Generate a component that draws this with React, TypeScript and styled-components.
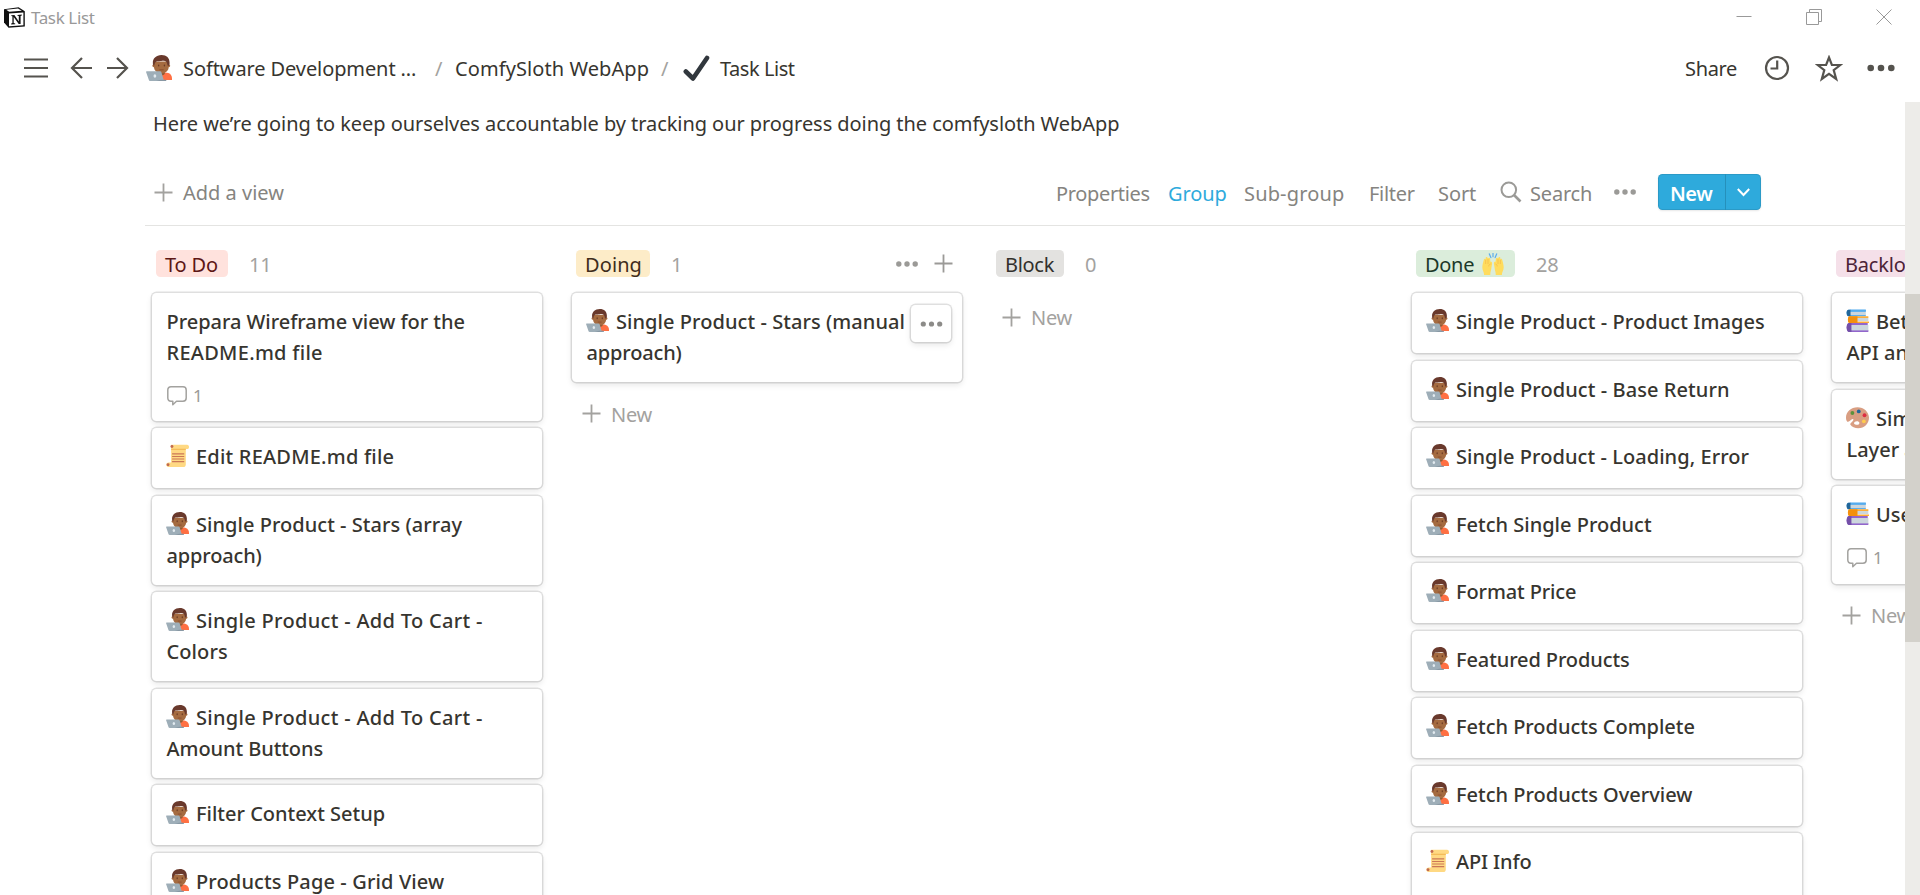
import React from 'react';
import styled, { createGlobalStyle, css } from 'styled-components';

const GlobalStyle = createGlobalStyle`
  *, *::before, *::after { box-sizing: border-box; }
  body { margin: 0; background: #fff; overflow: hidden; }
`;

const Window = styled.div`
  width: 1920px;
  height: 895px;
  display: flex;
  flex-direction: column;
  overflow: hidden;
  background: #fff;
  color: #37352f;
  font-family: "Noto Sans", "Open Sans", sans-serif;
  font-size: 20px;
  line-height: 31px;
  white-space: nowrap;
`;

const Tracked = styled.span<{ $track?: number }>`
  letter-spacing: ${(p) => p.$track ?? 0}px;
`;

const TitleBar = styled.header`
  flex: 0 0 34px;
  display: flex;
  align-items: center;
  padding: 0 28px 0 3px;
`;

const WindowTitle = styled.span`
  flex: 1;
  margin: 1px 0 0 5px;
  font-size: 17px;
  line-height: 24px;
  letter-spacing: -0.38px;
  color: #999;
`;

const WindowControls = styled.div`
  display: flex;
  gap: 54px;
`;

const TopBar = styled.nav`
  flex: 0 0 68px;
  display: flex;
  align-items: center;
  padding: 0 25px 0 24px;
`;

const NavIcons = styled.div`
  display: grid;
  grid-template-columns: 46px 36px 40px;
  align-items: center;
`;

const Crumbs = styled.div`
  flex: 1;
  display: grid;
  grid-template-columns: 37px 252px 20px 206px 22px 37px 1fr;
  align-items: center;
`;

const Slash = styled.span`
  color: #a3a29e;
`;

const TopActions = styled.div`
  display: grid;
  grid-template-columns: 79px 51px 52px 28px;
  align-items: center;
`;

const Viewport = styled.main`
  flex: 1;
  min-height: 0;
  display: flex;
`;

const Page = styled.div`
  flex: 1;
  min-width: 0;
  overflow: hidden;
`;

const ScrollTrack = styled.div`
  flex: 0 0 15px;
  padding-top: 192px;
  background: #edece9;
`;

const ScrollThumb = styled.div`
  height: 348px;
  background: #d3d1cb;
`;

const Description = styled.p`
  margin: 6px 0 0 153px;
  height: 33px;
  line-height: 32px;
`;

const ViewBar = styled.div`
  display: flex;
  align-items: center;
  justify-content: space-between;
  height: 85px;
  margin: 0 0 0 145px;
  padding: 18px 144px 0 9px;
  border-bottom: 1px solid #e4e4e2;
  color: #858480;
`;

const AddView = styled.div`
  display: flex;
  align-items: center;
  gap: 10px;

  span {
    padding-top: 1px;
  }
`;

const ViewTools = styled.div`
  display: grid;
  grid-template-columns: 112px 76px 125px 69px 62px 30px 84px 44px 103px;
  align-items: center;
`;

const Tool = styled(Tracked)<{ $active?: boolean }>`
  padding-top: 2px;
  color: ${(p) => (p.$active ? '#2eaadc' : '#858480')};
`;

const NewButton = styled.div`
  display: flex;
  height: 36px;
  border-radius: 4.5px;
  overflow: hidden;
  background: #2eaadc;
  box-shadow: inset 0 0 0 1px rgba(15, 15, 15, 0.1), 0 1px 2px rgba(15, 15, 15, 0.1);
  color: #fff;
  font-weight: 600;
`;

const NewLabel = styled.span`
  width: 68px;
  padding: 4px 0 0 12px;
  border-right: 1px solid #2590bb;
  letter-spacing: -0.5px;
`;

const NewArrow = styled.span`
  flex: 1;
  display: flex;
  align-items: center;
  justify-content: center;
`;

const Board = styled.div`
  display: flex;
  gap: 30px;
  padding: 24px 0 0 152px;
`;

const Column = styled.section`
  flex: 0 0 390px;
`;

const ColumnHead = styled.div`
  display: flex;
  align-items: center;
  height: 27px;
  margin-bottom: 16px;
  padding: 0 9px 0 4px;
`;

const tones = {
  red: css`background: #ffe2dd; color: #5d1715;`,
  yellow: css`background: #fdecc8; color: #402c1b;`,
  gray: css`background: #e3e2e0; color: #32302c;`,
  green: css`background: #dbeddb; color: #1c3829;`,
  pink: css`background: #f5e0e9; color: #4c2337;`,
};

const Tag = styled.span<{ $tone: keyof typeof tones; $width: number; $track: number }>`
  display: flex;
  align-items: center;
  gap: 8px;
  width: ${(p) => p.$width}px;
  height: 27px;
  padding: 1px 0 0 9px;
  border-radius: 4.5px;
  overflow: hidden;
  letter-spacing: ${(p) => p.$track}px;
  ${(p) => tones[p.$tone]}
`;

const Count = styled.span`
  flex: 1;
  margin: 1px 0 0 21px;
  letter-spacing: -0.2px;
  color: #a3a29f;
`;

const HeadActions = styled.div`
  display: flex;
  align-items: center;
  gap: 16px;
`;

const Card = styled.article<{ $height: number }>`
  position: relative;
  height: ${(p) => p.$height}px;
  margin-bottom: 7.5px;
  padding: 13px 14px 0;
  border-radius: 4.5px;
  background: #fff;
  box-shadow: 0 0 0 1.4px rgba(15, 15, 15, 0.12), 0 3px 6px rgba(15, 15, 15, 0.1);
  font-weight: 500;
`;

const Line = styled.div<{ $track: number }>`
  display: flex;
  height: 31px;
  padding-left: 0.5px;
  letter-spacing: ${(p) => p.$track}px;
`;

const CardEmoji = styled.span`
  flex: 0 0 30.5px;
  margin-left: -1px;
  padding-top: 3px;
  line-height: 0;
`;

const Comments = styled.div`
  display: flex;
  align-items: center;
  gap: 6px;
  margin: 16px 0 0 1px;
  color: #9b9a97;
  font-size: 17px;
  font-weight: 400;
  line-height: 24px;
`;

const MoreButton = styled.div`
  position: absolute;
  top: 12px;
  right: 11px;
  width: 40px;
  height: 37px;
  display: flex;
  align-items: center;
  justify-content: center;
  border-radius: 4.5px;
  background: #fff;
  box-shadow: 0 0 0 1.4px rgba(15, 15, 15, 0.12), 0 3px 6px rgba(15, 15, 15, 0.1);
`;

const AddCard = styled.div`
  display: flex;
  align-items: center;
  gap: 10px;
  height: 48px;
  padding-left: 10px;
  letter-spacing: -0.3px;
  color: #a3a29f;

  span {
    padding-top: 1px;
  }
`;

const Dots = ({ size, r, gap, color }: { size: number; r: number; gap: number; color: string }) => (
  <svg width={size} height="8" viewBox={`0 0 ${size} 8`} fill={color}>
    {[-gap, 0, gap].map((d) => (
      <circle key={d} cx={size / 2 + d} cy="4" r={r} />
    ))}
  </svg>
);

const Plus = ({ color = '#a3a29f' }: { color?: string }) => (
  <svg width="19" height="19" viewBox="0 0 19 19" stroke={color} strokeWidth="1.8">
    <path d="M9.5 0.5V18.5M0.5 9.5H18.5" />
  </svg>
);

const NotionLogo = () => (
  <svg width="23" height="23" viewBox="0 0 23 23">
    <path d="M1 3.2 15.6 1.2 21.8 5.2V20.4L5.6 21.8 1 16.6Z" fill="#111" />
    <path d="M3.2 3.8 15 2.4 18.8 4.8 6.2 5.7Z" fill="#fff" />
    <path d="M6 7.4 20.4 6.4V19.2L6 20.3Z" fill="#fff" />
    <path
      d="M8.3 9.2 11.4 9 15.8 15.4V10.1L14.5 9.7V8.9L18.8 8.6V9.4L17.6 9.9V17.9L15.7 18.1 10.7 11V17L12.2 17.5V18.2L8.2 18.4V17.6L9.4 17V10.3L8.3 10Z"
      fill="#111"
    />
  </svg>
);

const Technologist = ({ size }: { size: number }) => (
  <svg width={size} height={size} viewBox="0 0 36 36">
    <path d="M22 25c3-1 6-1 9 0 3.500 1.200 5 4 5 8v1.500H22Z" fill="#ff7043" />
    <path d="M17 21h9v5c-2 3-7 3-9 0Z" fill="#8f5a34" />
    <path d="M11 9h20.500v7c0 6-4.500 9.500-10.200 9.500S11 22 11 16Z" fill="#a56b40" />
    <circle cx="10.800" cy="15" r="2" fill="#a56b40" />
    <circle cx="31.500" cy="15" r="2" fill="#a56b40" />
    <path
      d="M21.500 0C14 0 9 5 9.500 11.500c0 2 .8 3.500 1.500 3.500 1 0 .5-3 2-5 1.300-1.800 3-1.300 5-1.500 3-.2 4.500-.8 6.500-.6 3 .3 4.500 2 4.800 4.100.2 1.600.6 3 1.700 3 1 0 1.700-1.800 1.700-4C32.700 4 28.500 0 21.500 0Z"
      fill="#69392c"
    />
    <ellipse cx="17.500" cy="14.500" rx="1" ry="1.500" fill="#6b3a24" />
    <ellipse cx="25.500" cy="14.500" rx="1" ry="1.500" fill="#6b3a24" />
    <path d="M18.500 20.500h6" stroke="#86492c" strokeWidth="1.200" />
    <path d="M1 22.500h18.500c1 0 1.500.4 1.800 1.300L25 36H6c-1 0-1.800-.5-2-1.300L.2 24c-.3-.9 0-1.500.8-1.500Z" fill="#9eaeb8" />
    <path d="M20.500 34.200h7.500V36H14Z" fill="#8898a4" />
    <ellipse cx="12.300" cy="29" rx="1.900" ry="2.400" fill="#e3ebf0" />
  </svg>
);

const Scroll = ({ size }: { size: number }) => (
  <svg width={size} height={size} viewBox="0 0 36 36">
    <path d="M8 1h25c2 0 3 1.500 3 3.500S35 8 33 8h-2v24c0 2.500-1.500 4-4 4H4c-2 0-3.500-1.500-3.500-3.500S2 29 4 29h4Z" fill="#ffd983" />
    <path d="M8 7.500h23v1.500H8Z" fill="#f0b04c" />
    <circle cx="9.300" cy="4" r="2.300" fill="#c1694f" />
    <circle cx="3.200" cy="32.500" r="2.300" fill="#c1694f" />
    <path d="M9.500 15.500h19M9.500 19.500h19M9.500 23.500h19M9.500 27.500h19" stroke="#cb7857" strokeWidth="1.800" />
  </svg>
);

const Books = ({ size }: { size: number }) => (
  <svg width={size} height={size} viewBox="0 0 36 36">
    <path d="M4 1h27v2H6v6h25v2.500H4C1.800 11.500 1 9 1 6.200S1.800 1 4 1Z" fill="#55acee" />
    <path d="M5.500 3H31v6.500H5.500Z" fill="#ccd6dd" />
    <path d="M6 1h25v3.500H6Z" fill="#55acee" />
    <path d="M1 5c.2-2.500 1.200-4 3-4h3v10.500H4C2 11.500.9 9 1 5Z" fill="#226699" />
    <path d="M6 11.500h29v2.500H9v5.500h27v2.500H6c-2 0-3-2-3-5.200s1-5.300 3-5.300Z" fill="#ffac33" />
    <path d="M9 14h26v5H9Z" fill="#ccd6dd" />
    <path d="M6 11.500h12v10.500H6c-2 0-3-2-3-5.200s1-5.300 3-5.300Z" fill="#f4900c" />
    <path d="M5 22h29v3H8v8h27v3H5c-2.500 0-4-2.800-4-7s1.500-7 4-7Z" fill="#9266cc" />
    <path d="M8 25h27v8.500H8Z" fill="#ccd6dd" />
    <path d="M5 22h3.500v14H5c-2.500 0-4-2.800-4-7s1.500-7 4-7Z" fill="#7450a8" />
  </svg>
);

const Palette = ({ size }: { size: number }) => (
  <svg width={size} height={size} viewBox="0 0 36 36">
    <path
      d="M18 2C8 2 0 9 0 18c0 3 .5 5 2 6.500 2 1.500 5-2.500 8-4 1.500-.5 2 .5 1.200 2-1.500 2.500-5.500 4.500-4.200 7C9 33 14 35 19 35c10 0 17-7.500 17-16.500S28 2 18 2Z"
      fill="#d99e82"
    />
    <path d="M14 24.500c2-1.500 7-1 7 2s-4 3.500-6.500 2.500-2.500-3-.5-4.500Z" fill="#fff" />
    <circle cx="10" cy="11" r="3" fill="#5c913b" />
    <circle cx="20" cy="8.500" r="3" fill="#226699" />
    <circle cx="29" cy="14.500" r="3" fill="#dd2e44" />
    <circle cx="28" cy="24" r="3" fill="#ffcc4d" />
  </svg>
);

const CheckMark = () => (
  <svg width="27" height="27" viewBox="0 0 27 27">
    <path d="M2.800 16.500 10 23.500 24 3" fill="none" stroke="#31373d" strokeWidth="4.600" strokeLinecap="round" strokeLinejoin="round" />
  </svg>
);

const RaisedHands = () => (
  <svg width="22" height="22" viewBox="0 0 36 36">
    <path d="M12 1.500l2.500 6M18 0v6M24 1.500l-2.500 6" stroke="#5dadec" strokeWidth="2" strokeLinecap="round" />
    <path
      d="M3 11c0-2 2.500-2 3 0V8c0-2 3-2 3.200 0l.8 1c.3-1.500 3-1.500 3.200.5l.6 5c1.500-.5 3 .5 2.700 2.500L15 27c-.5 3-1.500 4-1.500 9H3.500c0-5-3-7-3-12.500C.5 19 2 15 3 11Z"
      fill="#ffdc5d"
    />
    <path
      d="M33 11c0-2-2.500-2-3 0V8c0-2-3-2-3.200 0l-.8 1c-.3-1.500-3-1.500-3.200.5l-.6 5c-1.500-.5-3 .5-2.700 2.500L21 27c.5 3 1.500 4 1.500 9h10c0-5 3-7 3-12.500C35.500 19 34 15 33 11Z"
      fill="#ffdc5d"
    />
    <path d="M6 11v7M9.800 10v8M30 11v7M26.200 10v8M11 22c0-2 1-3.500 3-4M25 22c0-2-1-3.500-3-4" fill="none" stroke="#f2b146" strokeWidth="1" />
  </svg>
);

const CommentIcon = () => (
  <svg width="20" height="20" viewBox="0 0 20 20" fill="none" stroke="#a3a29f" strokeWidth="1.500" strokeLinejoin="round">
    <path d="M4 .8h12c2 0 3.200 1.200 3.200 3.200v8c0 2-1.200 3.200-3.200 3.200h-6.500L5.800 18.700V15.200H4C2 15.200.8 14 .8 12V4C.8 2 2 .8 4 .8Z" />
  </svg>
);

const emojis = { tech: Technologist, scroll: Scroll, books: Books, palette: Palette };

type CardData = {
  emoji?: keyof typeof emojis;
  lines: [string, number][];
  height?: number;
  comments?: number;
  more?: boolean;
};

type ColumnData = {
  name: string;
  tone: keyof typeof tones;
  tagWidth: number;
  track: number;
  count?: number;
  hands?: boolean;
  actions?: boolean;
  addNew?: boolean;
  cards: CardData[];
};

const columns: ColumnData[] = [
  {
    name: 'To Do', tone: 'red', tagWidth: 72, track: -0.15, count: 11,
    cards: [
      { lines: [['Prepara Wireframe view for the', -0.03], ['README.md file', 0.28]], comments: 1 },
      { emoji: 'scroll', lines: [['Edit README.md file', 0.21]] },
      { emoji: 'tech', lines: [['Single Product - Stars (array', 0.04], ['approach)', -0.16]] },
      { emoji: 'tech', lines: [['Single Product - Add To Cart -', 0.31], ['Colors', 0.1]] },
      { emoji: 'tech', lines: [['Single Product - Add To Cart -', 0.31], ['Amount Buttons', -0.07]] },
      { emoji: 'tech', lines: [['Filter Context Setup', 0]] },
      { emoji: 'tech', lines: [['Products Page - Grid View', 0.13]] },
    ],
  },
  {
    name: 'Doing', tone: 'yellow', tagWidth: 74, track: 0.1, count: 1, actions: true, addNew: true,
    cards: [{ emoji: 'tech', lines: [['Single Product - Stars (manual', 0.06], ['approach)', -0.16]], more: true }],
  },
  { name: 'Block', tone: 'gray', tagWidth: 68, track: -0.3, count: 0, addNew: true, cards: [] },
  {
    name: 'Done', tone: 'green', tagWidth: 99, track: -0.3, count: 28, hands: true,
    cards: [
      { emoji: 'tech', lines: [['Single Product - Product Images', 0.08]] },
      { emoji: 'tech', lines: [['Single Product - Base Return', 0.08]] },
      { emoji: 'tech', lines: [['Single Product - Loading, Error', 0.06]] },
      { emoji: 'tech', lines: [['Fetch Single Product', 0]] },
      { emoji: 'tech', lines: [['Format Price', -0.12]] },
      { emoji: 'tech', lines: [['Featured Products', -0.11]] },
      { emoji: 'tech', lines: [['Fetch Products Complete', -0.02]] },
      { emoji: 'tech', lines: [['Fetch Products Overview', 0]] },
      { emoji: 'scroll', lines: [['API Info', -0.12]], height: 98 },
    ],
  },
  {
    name: 'Backlog', tone: 'pink', tagWidth: 94, track: -0.2, addNew: true,
    cards: [
      { emoji: 'books', lines: [['Better', 0], ['API and', 0]] },
      { emoji: 'palette', lines: [['Simple', 0], ['Layer and', 0]] },
      { emoji: 'books', lines: [['Use', 0]], comments: 1 },
    ],
  },
];

function cardHeight(card: CardData) {
  if (card.height) return card.height;
  const multiline = card.lines.length > 1;
  return (multiline ? 89 : 60) + (card.comments ? (multiline ? 38.5 : 37.5) : 0);
}

function TaskCard({ card }: { card: CardData }) {
  const Emoji = card.emoji && emojis[card.emoji];
  return (
    <Card $height={cardHeight(card)}>
      {card.lines.map(([text, track], i) => (
        <Line key={text} $track={track}>
          {i === 0 && Emoji && (
            <CardEmoji>
              <Emoji size={23} />
            </CardEmoji>
          )}
          {text}
        </Line>
      ))}
      {card.comments && (
        <Comments>
          <CommentIcon />
          {card.comments}
        </Comments>
      )}
      {card.more && (
        <MoreButton>
          <Dots size={23} r={2.6} gap={8.2} color="#8c8b88" />
        </MoreButton>
      )}
    </Card>
  );
}

export default function App() {
  return (
    <Window>
      <GlobalStyle />
      <TitleBar>
        <NotionLogo />
        <WindowTitle>Task List</WindowTitle>
        <WindowControls>
          <svg width="16" height="16" stroke="#999" fill="none">
            <path d="M.5 7.500h15" />
          </svg>
          <svg width="16" height="16" stroke="#999" fill="none">
            <path d="M-.5 3.500h12v12h-12zM2.500 3.500v-3h12v12h-3" overflow="visible" transform="translate(1 0)" />
          </svg>
          <svg width="16" height="16" stroke="#999" fill="none">
            <path d="M.5.5l15 15M15.500.5l-15 15" />
          </svg>
        </WindowControls>
      </TitleBar>
      <TopBar>
        <NavIcons>
          <svg width="24" height="20" stroke="#55534e" strokeWidth="2.200">
            <path d="M0 1.500h24M0 10h24M0 18.500h24" />
          </svg>
          <svg width="23" height="22" stroke="#55534e" strokeWidth="2.200" fill="none">
            <path d="M22 11H2M12 1 2 11l10 10" />
          </svg>
          <svg width="23" height="22" stroke="#55534e" strokeWidth="2.200" fill="none">
            <path d="M1 11h20M11 1l10 10-10 10" />
          </svg>
        </NavIcons>
        <Crumbs>
          <Technologist size={26} />
          <Tracked $track={-0.1}>Software Development ...</Tracked>
          <Slash>/</Slash>
          <Tracked $track={0.08}>ComfySloth WebApp</Tracked>
          <Slash>/</Slash>
          <CheckMark />
          <Tracked $track={-0.45}>Task List</Tracked>
        </Crumbs>
        <TopActions>
          <Tracked $track={-0.35}>Share</Tracked>
          <svg width="26" height="26" viewBox="0 0 26 26" stroke="#55534e" strokeWidth="2.200" fill="none">
            <circle cx="13" cy="13" r="11" />
            <path d="M13.200 5.500V13.500H6.500" />
          </svg>
          <svg width="28" height="27" viewBox="0 0 28 27" stroke="#55534e" strokeWidth="2.200" fill="none">
            <path d="M14 2.500 16.900 10H25.300L18.700 15.100 21.200 24 14 18.900 6.800 24 9.300 15.100 2.700 10H11.100Z" />
          </svg>
          <Dots size={28} r={3.3} gap={10.3} color="#55534e" />
        </TopActions>
      </TopBar>
      <Viewport>
        <Page>
          <Description>
            <Tracked $track={-0.06}>
              Here we’re going to keep ourselves accountable by tracking our progress doing the comfysloth WebApp
            </Tracked>
          </Description>
          <ViewBar>
            <AddView>
              <Plus />
              <span>Add a view</span>
            </AddView>
            <ViewTools>
              <Tool $track={-0.34}>Properties</Tool>
              <Tool $track={-0.09} $active>Group</Tool>
              <Tool $track={0.16}>Sub-group</Tool>
              <Tool $track={-0.3}>Filter</Tool>
              <Tool $track={-0.1}>Sort</Tool>
              <svg width="22" height="22" viewBox="0 0 22 22" stroke="#9b9a97" fill="none">
                <circle cx="8.800" cy="8.800" r="7.300" strokeWidth="2" />
                <path d="M14 14l6.500 6.500" strokeWidth="2.600" />
              </svg>
              <Tool $track={-0.18}>Search</Tool>
              <Dots size={22} r={2.7} gap={8.2} color="#9b9a97" />
              <NewButton>
                <NewLabel>New</NewLabel>
                <NewArrow>
                  <svg width="13" height="9" viewBox="0 0 13 9" stroke="#fff" strokeWidth="2" fill="none">
                    <path d="M.8 1 6.500 7 12.200 1" />
                  </svg>
                </NewArrow>
              </NewButton>
            </ViewTools>
          </ViewBar>
          <Board>
            {columns.map((col) => (
              <Column key={col.name}>
                <ColumnHead>
                  <Tag $tone={col.tone} $width={col.tagWidth} $track={col.track}>
                    {col.name}
                    {col.hands && <RaisedHands />}
                  </Tag>
                  <Count>{col.count}</Count>
                  {col.actions && (
                    <HeadActions>
                      <Dots size={22} r={2.7} gap={8.2} color="#9b9a97" />
                      <Plus color="#9b9a97" />
                    </HeadActions>
                  )}
                </ColumnHead>
                {col.cards.map((card, i) => (
                  <TaskCard key={i} card={card} />
                ))}
                {col.addNew && (
                  <AddCard>
                    <Plus />
                    <span>New</span>
                  </AddCard>
                )}
              </Column>
            ))}
          </Board>
        </Page>
        <ScrollTrack>
          <ScrollThumb />
        </ScrollTrack>
      </Viewport>
    </Window>
  );
}
